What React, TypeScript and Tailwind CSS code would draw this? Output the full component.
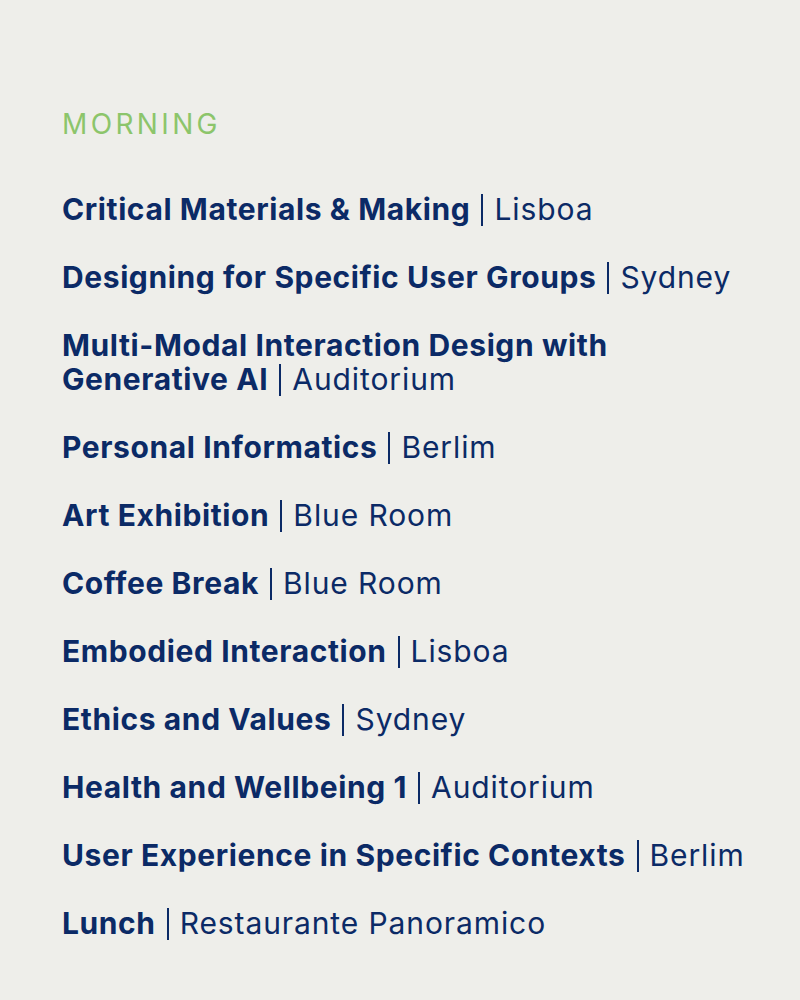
const sessions = [
  { title: "Critical Materials & Making", room: "Lisboa" },
  { title: "Designing for Specific User Groups", room: "Sydney" },
  { title: "Multi-Modal Interaction Design with", title2: "Generative AI", room: "Auditorium" },
  { title: "Personal Informatics", room: "Berlim" },
  { title: "Art Exhibition", room: "Blue Room" },
  { title: "Coffee Break", room: "Blue Room" },
  { title: "Embodied Interaction", room: "Lisboa" },
  { title: "Ethics and Values", room: "Sydney" },
  { title: "Health and Wellbeing 1", room: "Auditorium" },
  { title: "User Experience in Specific Contexts", room: "Berlim" },
  { title: "Lunch", room: "Restaurante Panoramico" },
];

const App = () => {
  return (
    <div
      className="w-[800px] h-[1000px] bg-[#eeeeea] pl-[62px] pt-[104px] text-[#0b2a66]"
      style={{ fontFamily: "Inter, 'Open Sans', sans-serif" }}
    >
      <div className="text-[28px] leading-[40px] tracking-[0.12em] text-[#8cc56b]">
        MORNING
      </div>
      <div className="mt-[48px] flex flex-col gap-[34px]">
        {sessions.map((s) => (
          <div key={s.title} className="whitespace-nowrap text-[30px] leading-[34px]">
            <span className="font-bold tracking-[0.02em]">{s.title}</span>
            {s.title2 && (
              <>
                <br />
                <span className="font-bold tracking-[0.02em]">{s.title2}</span>
              </>
            )}
            <span className="inline-block align-[-6px] w-[2px] h-[32px] bg-[#0b2a66] mx-[11px]" />
            <span className="font-normal tracking-[0.03em]">{s.room}</span>
          </div>
        ))}
      </div>
    </div>
  );
};

export default App;
